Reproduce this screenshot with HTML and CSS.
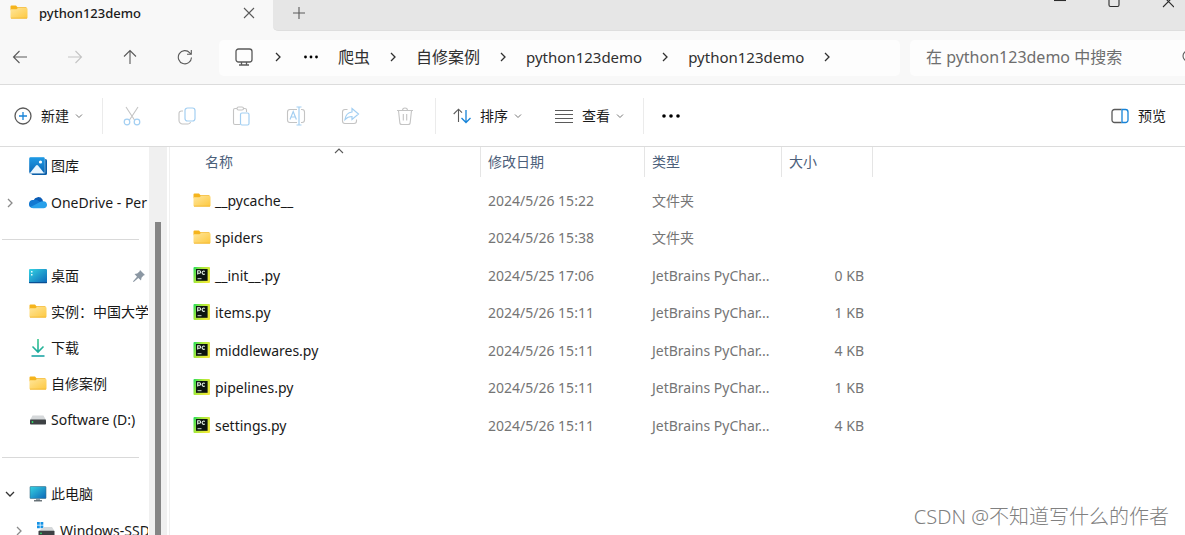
FILE: index.html
```html
<!DOCTYPE html>
<html lang="zh-CN">
<head>
<meta charset="utf-8">
<title>python123demo</title>
<link rel="stylesheet" href="styles.css">
</head>
<body>
<svg class="defs" aria-hidden="true">
  <defs>
    <linearGradient id="g-folder" x1="0" y1="0" x2="1" y2="1"><stop offset="0" stop-color="#ffe69b"/><stop offset="1" stop-color="#fdc83f"/></linearGradient>
    <linearGradient id="g-pc" x1="0" y1="0" x2="1" y2="0.5"><stop offset="0" stop-color="#1fdc5a"/><stop offset="0.45" stop-color="#a8e83a"/><stop offset="1" stop-color="#ece93a"/></linearGradient>
    <linearGradient id="g-screen" x1="0" y1="0" x2="1" y2="1"><stop offset="0" stop-color="#35d3e2"/><stop offset="1" stop-color="#0c66b8"/></linearGradient>
    <linearGradient id="g-photo" x1="0" y1="0" x2="0" y2="1"><stop offset="0" stop-color="#1f9be6"/><stop offset="1" stop-color="#0a66b4"/></linearGradient>
    <linearGradient id="g-down" x1="0" y1="0" x2="0" y2="1"><stop offset="0" stop-color="#3cc98f"/><stop offset="1" stop-color="#0f9fa0"/></linearGradient>
    <symbol id="folder" viewBox="0 0 18 18"><path d="M.5 2.500a1 1 0 0 1 1-1h4.500l1.500 1.700h9v3H.5z" fill="#f5b41c"/><path d="M.5 5.200h6l1.400-1.300h8.600a1 1 0 0 1 1 1v8.600a1 1 0 0 1-1 1h-15a1 1 0 0 1-1-1z" fill="url(#g-folder)"/><path d="M1 14.200h16" stroke="#f0b429" stroke-width=".8"/></symbol>
    <symbol id="pycharm" viewBox="0 0 18 18"><rect x=".5" y="0" width="16.500" height="16" rx="1" fill="url(#g-pc)"/><rect x="3" y="2" width="11.600" height="11.800" fill="#0c1410"/><path d="M4.700 7.500V3.800h1.700a1.200 1.200 0 0 1 0 2.400H4.700M11.800 4.500a1.600 1.600 0 1 0 0 2.400" fill="none" stroke="#e8f5e8" stroke-width="1.100"/><path d="M4.500 11.700h4" stroke="#c9d6c9"/></symbol>
    <symbol id="chev" viewBox="0 0 8 12"><path d="M2 2l4 4-4 4" fill="none" stroke="currentColor" stroke-width="1.300"/></symbol>
    <symbol id="down" viewBox="0 0 8 8"><path d="M1 2.500l3 3 3-3" fill="none" stroke="currentColor"/></symbol>
  </defs>
</svg>

<div class="window">
  <header class="tabs">
    <div class="tab">
      <svg class="i18"><use href="#folder"/></svg>
      <span class="tab-title">python123demo</span>
      <button class="plain" aria-label="关闭标签页"><svg class="i12" viewBox="0 0 12 12"><path d="M1 1l10 10M11 1L1 11" class="ln"/></svg></button>
    </div>
    <button class="plain add" aria-label="新标签页"><svg class="i12" viewBox="0 0 12 12"><path d="M6 0v12M0 6h12" class="ln"/></svg></button>
    <div class="controls">
      <button class="plain" aria-label="最小化"><svg class="i12" viewBox="0 0 12 12"><path d="M0 .5h12" class="ln dark"/></svg></button>
      <button class="plain" aria-label="最大化"><svg class="i12" viewBox="0 0 12 12"><path d="M1 0v5a1.500 1.500 0 0 0 1.500 1.500h7A1.500 1.500 0 0 0 11 5V0" class="ln dark"/></svg></button>
      <button class="plain" aria-label="关闭"><svg class="i12" viewBox="0 0 12 12"><path d="M1-4l11 11M12-4L1 7" class="ln dark"/></svg></button>
    </div>
  </header>

  <nav class="navbar">
    <div class="history">
      <button class="plain" aria-label="后退"><svg class="i16" viewBox="0 0 16 16"><path d="M15 8H1.500M7.500 2L1.500 8l6 6" class="ln"/></svg></button>
      <button class="plain" aria-label="前进" disabled><svg class="i16" viewBox="0 0 16 16"><path d="M1 8h13.500M8.500 2l6 6-6 6" class="ln pale"/></svg></button>
      <button class="plain" aria-label="向上"><svg class="i16" viewBox="0 0 16 16"><path d="M8 15V1.500M2 7.500l6-6 6 6" class="ln"/></svg></button>
      <button class="plain" aria-label="刷新"><svg class="i16" viewBox="0 0 16 16"><path d="M14.500 8.500A6.600 6.600 0 1 1 12.800 3.800L14 5M14.300 1v4.300H10" class="ln"/></svg></button>
    </div>
    <div class="address">
      <svg class="i18" viewBox="0 0 18 18"><rect x="1" y="1" width="16" height="13" rx="2.500" class="ln w"/><path d="M6.500 14v2.500M11.500 14v2.500M4 17h10" class="ln w"/></svg>
      <svg class="sep first"><use href="#chev"/></svg>
      <svg class="more" viewBox="0 0 16 4"><circle cx="2.500" cy="2" r="1.400"/><circle cx="8" cy="2" r="1.400"/><circle cx="13.500" cy="2" r="1.400"/></svg>
      <a href="#">爬虫</a><svg class="sep"><use href="#chev"/></svg>
      <a href="#">自修案例</a><svg class="sep"><use href="#chev"/></svg>
      <a href="#" class="latin">python123demo</a><svg class="sep"><use href="#chev"/></svg>
      <a href="#" class="latin">python123demo</a><svg class="sep"><use href="#chev"/></svg>
    </div>
    <div class="search">
      <input type="search" aria-label="搜索" placeholder="在 python123demo 中搜索">
      <svg class="i16" viewBox="0 0 16 16"><circle cx="6" cy="7" r="5" class="ln"/><path d="M10 11l5 5" class="ln"/></svg>
    </div>
  </nav>

  <div class="toolbar">
    <button class="tool new"><svg class="i18" viewBox="0 0 18 18"><circle cx="9" cy="9" r="8" class="ln w"/><path d="M9 5v8M5 9h8" class="ln blue"/></svg>新建<svg class="dd"><use href="#down"/></svg></button>
    <div class="actions">
      <button class="plain" aria-label="剪切" disabled><svg class="i20" viewBox="0 0 20 20"><path d="M4 1l8.500 13M16 1L7.500 14" class="ln pale"/><circle cx="5" cy="16" r="2.800" class="ln sky"/><circle cx="15" cy="16" r="2.800" class="ln sky"/></svg></button>
      <button class="plain" aria-label="复制" disabled><svg class="i20" viewBox="0 0 20 20"><path d="M6 5H4.500A2.500 2.500 0 0 0 2 7.500v7A3.500 3.500 0 0 0 5.500 18H11a2.500 2.500 0 0 0 2.500-2" class="ln pale"/><rect x="8" y="2" width="10" height="13" rx="2.500" class="ln sky"/></svg></button>
      <button class="plain" aria-label="粘贴" disabled><svg class="i20" viewBox="0 0 20 20"><path d="M9 18.500H4A1.500 1.500 0 0 1 2.500 17V4A1.500 1.500 0 0 1 4 2.500h2M12 2.500h2A1.500 1.500 0 0 1 15.500 4v2" class="ln pale"/><rect x="6" y="1" width="6.500" height="3" rx="1.500" class="ln pale"/><rect x="9.500" y="7" width="8.500" height="12" rx="1.500" class="ln sky"/></svg></button>
      <button class="plain" aria-label="重命名" disabled><svg class="i20" viewBox="0 0 20 20"><path d="M11 3.500H4A2.500 2.500 0 0 0 1.500 6v8A2.500 2.500 0 0 0 4 16.500h7M15 3.500h1A2.500 2.500 0 0 1 18.500 6v8a2.500 2.500 0 0 1-2.500 2.500h-1" class="ln pale"/><path d="M4 13.500l3.200-8 3.200 8M5 11h4.400M13 1v18M10.500 1h5M10.500 19h5" class="ln sky"/></svg></button>
      <button class="plain" aria-label="共享" disabled><svg class="i20" viewBox="0 0 20 20"><path d="M7.500 3.500H5A2.500 2.500 0 0 0 2.500 6v9A2.500 2.500 0 0 0 5 17.500h9a2.500 2.500 0 0 0 2.500-2.500v-1.500" class="ln pale"/><path d="M12 2.500l6.500 5.500-6.500 5.500v-3c-3 0-5 .8-7 3 .5-4 3-7 7-7.500z" class="ln sky"/></svg></button>
      <button class="plain" aria-label="删除" disabled><svg class="i20" viewBox="0 0 20 20"><path d="M2 4.500h16M7.500 4.500a2.500 2.500 0 0 1 5 0M3.500 4.500l1.300 12a2 2 0 0 0 2 2h6.400a2 2 0 0 0 2-2l1.300-12M8.300 8v6.500M11.700 8v6.500" class="ln pale"/></svg></button>
    </div>
    <button class="tool sort"><svg class="i18" viewBox="0 0 18 18"><path d="M5.500 15V2.500M.7 7l4.800-4.800L9 5.700" class="ln"/><path d="M13 3v12.500M8.500 11l4.500 4.500 4.500-4.500" class="ln blue"/></svg>排序<svg class="dd"><use href="#down"/></svg></button>
    <button class="tool view"><svg class="i18" viewBox="0 0 18 18"><path d="M0 3.500h18M0 7.500h18M0 11.500h18M0 15.500h18" class="ln"/></svg>查看<svg class="dd"><use href="#down"/></svg></button>
    <button class="plain dots" aria-label="更多"><svg class="i20" viewBox="0 0 20 20"><circle cx="3" cy="10" r="1.800"/><circle cx="10" cy="10" r="1.800"/><circle cx="17" cy="10" r="1.800"/></svg></button>
    <button class="tool preview"><svg class="i18" viewBox="0 0 18 18"><path d="M10.500 2.500h-7A2.500 2.500 0 0 0 1 5v8a2.500 2.500 0 0 0 2.500 2.500h7" class="ln w"/><path d="M11 2.500h3.500A2.500 2.500 0 0 1 17 5v8a2.500 2.500 0 0 1-2.500 2.500H11z" class="ln blue"/></svg>预览</button>
  </div>

  <main class="body">
    <aside class="side">
      <div class="tree">
        <ul class="group">
          <li><span class="tw"></span><svg class="i18" viewBox="0 0 18 18"><rect x="2.500" y="2" width="15.500" height="16" rx="1.500" fill="#0a5ea8"/><rect x="0" y="0" width="16" height="16.500" rx="1.500" fill="url(#g-photo)" stroke="#fff" stroke-width=".4"/><path d="M1 16l6-7.500q1-1 2 0l6 7.500z" fill="#e9f6ff"/><circle cx="11.500" cy="5" r="1.600" fill="#fff"/></svg><a href="#">图库</a></li>
          <li><span class="tw"><svg class="arrow"><use href="#chev"/></svg></span><svg class="i18" viewBox="0 0 18 18"><path d="M4.500 6.500a5 5 0 0 1 9-1l1 4-10 4z" fill="#0a5cb5"/><path d="M4.500 6A4 4 0 0 0 3.500 14L12 8.500 8 6q-1.500-.6-3.500 0z" fill="#1279d2"/><path d="M12 7.500q5.500-1.500 6 3a3.500 3.500 0 0 1-3.500 3.800H4.500a4 4 0 0 1-3-1.300z" fill="#28a0ea"/></svg><a href="#">OneDrive - Per</a></li>
        </ul>
        <hr>
        <ul class="group quick">
          <li><span class="tw"></span><svg class="i18" viewBox="0 0 18 18"><rect x="0" y="2" width="18" height="14" rx="1" fill="url(#g-screen)"/><path d="M2 4h1.500v1.500H2zM2 7h1.500v1.500H2z" fill="#e6fbff"/><path d="M0 15h18v.6a.6.6 0 0 1-.6.6H.6a.6.6 0 0 1-.6-.6z" fill="#0a4f93"/></svg><a href="#">桌面</a><svg class="pin" viewBox="0 0 12 12"><path d="M7 0l5 5-1.500.5L8.500 7.800 8 10.500 5.300 8 1 11.800 0 12l.3-1L4 6.700 1.500 4l2.700-.5L6.500 1.500z" fill="#8b97a3"/></svg></li>
          <li><span class="tw"></span><svg class="i18"><use href="#folder"/></svg><a href="#">实例：中国大学排</a></li>
          <li><span class="tw"></span><svg class="i18" viewBox="0 0 18 18"><path d="M9 0v13M3.500 7.500L9 13l5.500-5.500M2.500 17h13" fill="none" stroke="url(#g-down)" stroke-width="1.600"/></svg><a href="#">下载</a></li>
          <li><span class="tw"></span><svg class="i18"><use href="#folder"/></svg><a href="#">自修案例</a></li>
          <li><span class="tw"></span><svg class="i18" viewBox="0 0 18 18"><path d="M3.500 4.500h11L17 9H1z" fill="#d5d8da"/><rect x="1" y="8.500" width="16" height="5" rx=".8" fill="#3d4144"/><circle cx="3.500" cy="11" r=".9" fill="#2fe06a"/></svg><a href="#">Software (D:)</a></li>
        </ul>
        <hr>
        <ul class="group">
          <li><span class="tw"><svg class="arrow open"><use href="#chev"/></svg></span><svg class="i18" viewBox="0 0 18 18"><rect x="1" y="1.500" width="16" height="12" rx=".6" fill="url(#g-screen)" stroke="#3a6f88" stroke-width=".6"/><path d="M7 14h4v1.500H7z" fill="#8fa0aa"/><path d="M5 15.800h8" stroke="#4b565c" stroke-width="1.200"/></svg><a href="#">此电脑</a></li>
          <li class="nested"><span class="tw"><svg class="arrow"><use href="#chev"/></svg></span><svg class="i18" viewBox="0 0 18 18"><path d="M0 0h2.800v2.800H0zM3.500 0h2.800v2.800H3.500zM0 3.500h2.800v2.800H0zM3.500 3.500h2.800v2.800H3.500z" fill="#1593e6"/><path d="M7 5h8l2.500 4H1.500z" fill="#d5d8da"/><rect x="1.500" y="8.800" width="16" height="5" rx=".8" fill="#3d4144"/><circle cx="4" cy="11.300" r=".9" fill="#2fe06a"/></svg><a href="#">Windows-SSD</a></li>
        </ul>
      </div>
      <div class="scroll"><div class="thumb"></div></div>
    </aside>

    <section class="files">
      <table>
        <colgroup><col class="c-name"><col class="c-date"><col class="c-type"><col class="c-size"></colgroup>
        <thead>
          <tr>
            <th><button class="head name">名称<svg class="up" viewBox="0 0 10 6"><path d="M1 5l4-4 4 4" class="ln"/></svg></button></th>
            <th><button class="head">修改日期</button></th>
            <th><button class="head">类型</button></th>
            <th><button class="head">大小</button></th>
          </tr>
        </thead>
        <tbody>
          <tr><td><div class="file"><svg class="i18"><use href="#folder"/></svg>__pycache__</div></td><td>2024/5/26 15:22</td><td>文件夹</td><td></td></tr>
          <tr><td><div class="file"><svg class="i18"><use href="#folder"/></svg>spiders</div></td><td>2024/5/26 15:38</td><td>文件夹</td><td></td></tr>
          <tr><td><div class="file"><svg class="i18"><use href="#pycharm"/></svg>__init__.py</div></td><td>2024/5/25 17:06</td><td>JetBrains PyChar...</td><td>0 KB</td></tr>
          <tr><td><div class="file"><svg class="i18"><use href="#pycharm"/></svg>items.py</div></td><td>2024/5/26 15:11</td><td>JetBrains PyChar...</td><td>1 KB</td></tr>
          <tr><td><div class="file"><svg class="i18"><use href="#pycharm"/></svg>middlewares.py</div></td><td>2024/5/26 15:11</td><td>JetBrains PyChar...</td><td>4 KB</td></tr>
          <tr><td><div class="file"><svg class="i18"><use href="#pycharm"/></svg>pipelines.py</div></td><td>2024/5/26 15:11</td><td>JetBrains PyChar...</td><td>1 KB</td></tr>
          <tr><td><div class="file"><svg class="i18"><use href="#pycharm"/></svg>settings.py</div></td><td>2024/5/26 15:11</td><td>JetBrains PyChar...</td><td>4 KB</td></tr>
        </tbody>
      </table>
    </section>
  </main>
  <div class="watermark">CSDN @不知道写什么的作者</div>
</div>
</body>
</html>
```
FILE: styles.css
```css
* { box-sizing: border-box; }
body {
  margin: 0;
  background: #fff;
  color: #1b1b1b;
  font: 14px/20px "Noto Sans", "Noto Sans CJK SC", sans-serif;
}
button, input { font: inherit; color: inherit; }
button { border: 0; background: none; padding: 0; }
a { color: inherit; text-decoration: none; white-space: nowrap; }
svg { display: block; flex: none; }
.defs { position: absolute; width: 0; height: 0; }
.i12 { width: 12px; height: 12px; }
.i16 { width: 16px; height: 16px; }
.i18 { width: 18px; height: 18px; }
.i20 { width: 20px; height: 20px; }
.ln { fill: none; stroke: #5a5a5a; stroke-width: 1.1; }
.ln.w { stroke-width: 1.3; }
.ln.dark { stroke: #2b2b2b; }
.ln.pale { stroke: #c4c4c4; }
.ln.blue { stroke: #1683d8; stroke-width: 1.3; }
.ln.sky { stroke: #a3cff2; stroke-width: 1.2; }
.plain { display: grid; place-items: center; }

.window {
  position: relative;
  display: flex;
  flex-direction: column;
  height: 100vh;
  overflow: hidden;
}

/* tab strip */
.tabs { display: flex; background: #f8f8f8; }
.tab {
  display: flex;
  align-items: center;
  width: 273px;
  height: 31px;
  padding: 0 18px 6px 10px;
}
.tab-title { flex: 1; padding-left: 11px; font-size: 13px; font-weight: 500; }
.add {
  width: 52px;
  padding-bottom: 4px;
  background: #e6e6e6;
  border-bottom: 1px solid #dedede;
  border-radius: 0 0 0 5px;
}
.controls {
  flex: 1;
  display: flex;
  justify-content: flex-end;
  align-items: flex-start;
  gap: 42px;
  padding-right: 11px;
  background: #e6e6e6;
  border-bottom: 1px solid #dedede;
}

/* navigation */
.navbar {
  display: flex;
  align-items: center;
  height: 54px;
  background: #f8f8f8;
  border-bottom: 1px solid #dcdcdc;
}
.history { display: flex; gap: 39px; width: 219px; padding: 0 0 2px 12px; }
.address {
  display: flex;
  align-items: center;
  flex: 1;
  height: 36px;
  padding: 0 0 2px 16px;
  border-radius: 5px;
  background: #fdfdfd;
  font-size: 16px;
  color: #303030;
}
.latin { font-size: 15px; }
.sep { width: 8px; height: 12px; margin: 0 19px; }
.sep.first { margin: 0 21px; }
.more { width: 16px; height: 4px; margin-right: 19px; }
.search {
  display: flex;
  align-items: center;
  width: 288px;
  height: 36px;
  margin: 0 -13px 0 10px;
  padding: 0 0 1px 16px;
  border-radius: 5px;
  background: #fdfdfd;
  font-size: 16px;
}
.search input { flex: 1; min-width: 0; padding: 0; border: 0; outline: 0; background: none; }
.search input::placeholder { color: #6e6e6e; opacity: 1; }

/* commands */
.toolbar {
  display: flex;
  align-items: center;
  height: 62px;
  border-bottom: 1px solid #dcdcdc;
}
.tool { display: flex; align-items: center; gap: 9px; }
.dd { width: 8px; height: 8px; color: #777; margin-left: -3px; }
.new { width: 102px; padding-left: 14px; }
.actions {
  display: flex;
  justify-content: space-between;
  align-items: center;
  width: 334px;
  height: 36px;
  padding: 0 20px 0 19px;
  border: solid #ebebeb;
  border-width: 0 1px;
}
.sort { padding-left: 17px; width: 119px; }
.view { width: 89px; height: 36px; border-right: 1px solid #ebebeb; }
.dots { padding-left: 17px; }
.preview { margin-left: auto; padding-right: 19px; }

/* folder tree */
.body { display: flex; flex: 1; min-height: 0; }
.side { display: flex; width: 170px; border-right: 1px solid #f0f0f0; }
.tree { flex: 1; min-width: 0; margin-right: 1px; overflow: hidden; }
.tree hr { height: 1px; margin: 18px 9px 17px 2px; border: 0; background: #d9d9d9; }
.group { list-style: none; margin: 0; padding: 0; color: #191919; }
.group li { display: flex; align-items: center; height: 37px; }
.group a { flex: 1; min-width: 0; padding-left: 4px; }
.quick { padding: 1px 0; }
.quick li { height: 36px; }
.tw { flex: none; width: 29px; padding-left: 6px; }
.nested .tw { width: 37px; padding-left: 15px; }
.nested a { padding-left: 5px; }
.arrow { width: 8px; height: 12px; color: #8a8a8a; }
.arrow.open { transform: rotate(90deg); color: #333; }
.pin { width: 12px; height: 12px; margin-right: 3px; }
.scroll { width: 18px; margin-right: 2px; padding: 75px 6px 0; background: #f0f0f0; }
.thumb { height: 100%; background: #858585; }

/* file list */
.files { flex: 1; min-width: 0; }
table { width: 703px; table-layout: fixed; border-collapse: collapse; }
.c-name { width: 311px; }
.c-date { width: 164px; }
.c-type { width: 137px; }
.c-size { width: 91px; }
th { padding: 0 0 5px; font-weight: 400; }
.head {
  display: flex;
  align-items: center;
  width: 100%;
  height: 30px;
  padding-left: 7px;
  border-right: 1px solid #e5e5e5;
  color: #4c607a;
}
.head.name { padding-left: 35px; }
.up { width: 10px; height: 6px; margin: 0 auto 22px 101px; }
td { height: 37px; padding: 0 0 0 7px; color: #757575; white-space: nowrap; }
tr:nth-child(even) td { height: 38px; }
td:first-child { padding-left: 23px; color: #191919; }
td:last-child { padding: 0 9px 0 0; text-align: right; }
.file { display: flex; align-items: center; gap: 4px; }

.watermark {
  position: absolute;
  right: 16px;
  bottom: 5px;
  font-size: 20px;
  line-height: 26px;
  font-weight: 300;
  color: #808080;
}
```
